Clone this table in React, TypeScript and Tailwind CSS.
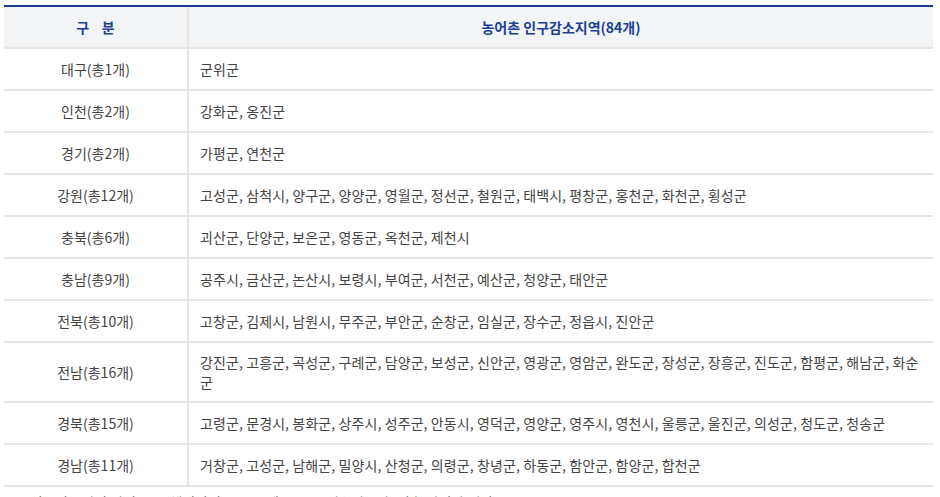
const rows: [string, string][] = [
  ["대구(총1개)", "군위군"],
  ["인천(총2개)", "강화군, 옹진군"],
  ["경기(총2개)", "가평군, 연천군"],
  ["강원(총12개)", "고성군, 삼척시, 양구군, 양양군, 영월군, 정선군, 철원군, 태백시, 평창군, 홍천군, 화천군, 횡성군"],
  ["충북(총6개)", "괴산군, 단양군, 보은군, 영동군, 옥천군, 제천시"],
  ["충남(총9개)", "공주시, 금산군, 논산시, 보령시, 부여군, 서천군, 예산군, 청양군, 태안군"],
  ["전북(총10개)", "고창군, 김제시, 남원시, 무주군, 부안군, 순창군, 임실군, 장수군, 정읍시, 진안군"],
  ["전남(총16개)", "강진군, 고흥군, 곡성군, 구례군, 담양군, 보성군, 신안군, 영광군, 영암군, 완도군, 장성군, 장흥군, 진도군, 함평군, 해남군, 화순군"],
  ["경북(총15개)", "고령군, 문경시, 봉화군, 상주시, 성주군, 안동시, 영덕군, 영양군, 영주시, 영천시, 울릉군, 울진군, 의성군, 청도군, 청송군"],
  ["경남(총11개)", "거창군, 고성군, 남해군, 밀양시, 산청군, 의령군, 창녕군, 하동군, 함안군, 함양군, 합천군"],
];

export default function App() {
  return (
    <div className="h-[497px] w-[940px] overflow-hidden bg-white pl-[4px] pt-[5px] font-['Noto_Sans_CJK_KR',sans-serif] text-[14px] text-[#444]">
      {/* Table */}
      <div className="w-[929px] border-t-2 border-[#1c3f94]">
        {/* Header */}
        <div className="flex h-[42px] border-b-2 border-[#e6e6e6] bg-[#f3f4f6] font-bold text-[#1c3f94]">
          <div className="flex w-[185px] items-center justify-center border-r-2 border-[#e6e6e6]">
            구&nbsp;&nbsp;&nbsp;&nbsp;분
          </div>
          <div className="flex flex-1 items-center justify-center">농어촌 인구감소지역(84개)</div>
        </div>

        {/* Rows */}
        {rows.map(([area, list]) => (
          <div key={area} className="flex min-h-[42px] border-b-2 border-[#e6e6e6]">
            <div className="flex w-[185px] shrink-0 items-center justify-center border-r-2 border-[#e6e6e6]">
              {area}
            </div>
            <div className="flex flex-1 items-center py-[9px] pl-[11px] pr-[10px] leading-[20px] tracking-[0.1px]">
              {list}
            </div>
          </div>
        ))}
      </div>

      {/* Note (cut off at the bottom edge, as in the screenshot) */}
      <p className="mt-[5px] pl-[16px] text-[14px] text-[#444]">
        * 인구감소지역 지정 고시(행정안전부 고시 제2021-66호) 기준, 농어촌 지역만 해당
      </p>
    </div>
  );
}
